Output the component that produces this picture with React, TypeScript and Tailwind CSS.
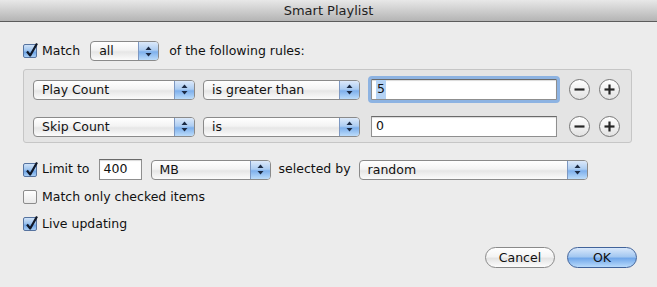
import React from 'react';

const Arrows = () => (
  <svg width="7" height="11" viewBox="0 0 7 11">
    <path d="M3.5 0.5 L6.5 4 L0.5 4 Z" fill="#1b2a44" />
    <path d="M3.5 10.5 L6.5 7 L0.5 7 Z" fill="#1b2a44" />
  </svg>
);

const Popup = ({ label, w }: { label: string; w: string }) => (
  <div
    className={`flex h-[20px] ${w} shrink-0 overflow-hidden rounded-[4px] border border-[#8a8a8a] bg-[linear-gradient(to_bottom,#ffffff_0%,#f3f3f3_45%,#e6e6e6_55%,#fbfbfb_100%)]`}
  >
    <span className="flex-1 truncate pl-[8px] leading-[18px]">{label}</span>
    <span className="flex w-[20px] items-center justify-center border-l border-[#7d98c2] bg-[linear-gradient(to_bottom,#dce9fa_0%,#adcdf2_45%,#7eb0ec_55%,#bcdcfa_100%)]">
      <Arrows />
    </span>
  </div>
);

const Check = ({ on }: { on: boolean }) => (
  <span
    className={`relative flex h-[14px] w-[14px] shrink-0 rounded-[2px] border ${
      on
        ? 'border-[#56739f] bg-[linear-gradient(to_bottom,#cfe2f8_0%,#9ec4ee_45%,#6fa5e6_60%,#a9cff6_100%)]'
        : 'border-[#8c8c8c] bg-[linear-gradient(to_bottom,#ffffff,#e9e9e9)]'
    }`}
  >
    {on && (
      <svg className="absolute left-[1px] top-[-3px]" width="14" height="16" viewBox="0 0 14 16">
        <path d="M2 9.5 L5.2 13.5 L12 1.5" fill="none" stroke="#101828" strokeWidth="2.2" strokeLinejoin="round" />
      </svg>
    )}
  </span>
);

const Field = ({ value, w, focus }: { value: string; w: string; focus?: boolean }) => (
  <div
    className={`flex h-[21px] ${w} shrink-0 items-center border border-[#8f8f8f] border-t-[#6a6a6a] bg-white pl-[4px] shadow-[inset_0_1px_1px_rgba(0,0,0,0.15)] ${
      focus ? 'outline outline-[3px] outline-[#8db3e2] rounded-[1px]' : ''
    }`}
  >
    {focus ? <span className="bg-[#b5d3f5] px-[1px]">{value}</span> : value}
  </div>
);

const Round = ({ plus }: { plus?: boolean }) => (
  <span className="flex h-[21px] w-[21px] items-center justify-center rounded-full border border-[#777777] bg-[linear-gradient(to_bottom,#ffffff,#e2e2e2)]">
    <svg width="11" height="11" viewBox="0 0 11 11">
      <path d="M0.5 5.5 H10.5" stroke="#262626" strokeWidth="2.2" />
      {plus && <path d="M5.5 0.5 V10.5" stroke="#262626" strokeWidth="2.2" />}
    </svg>
  </span>
);

const RuleRow = ({ field, op, value, focus }: { field: string; op: string; value: string; focus?: boolean }) => (
  <div className="flex h-[21px] items-center">
    <Popup label={field} w="w-[162px]" />
    <div className="ml-[8px]">
      <Popup label={op} w="w-[157px]" />
    </div>
    <div className="ml-[11px]">
      <Field value={value} w="w-[186px]" focus={focus} />
    </div>
    <div className="ml-[12px] flex gap-[9px]">
      <Round />
      <Round plus />
    </div>
  </div>
);

export default function App() {
  return (
    <div className="h-[287px] w-[657px] overflow-hidden bg-[#ececec] font-['DejaVu_Sans',sans-serif] text-[12.5px] text-[#111]">
      {/* Title bar */}
      <div className="flex h-[22px] items-center justify-center border-b border-[#5c5c5c] bg-[linear-gradient(to_bottom,#e8e8e8,#b4b4b4)] text-[13px] text-[#1e1e1e]">
        Smart Playlist
      </div>

      <div className="pl-[23px] pr-[20px]">
        {/* Match row */}
        <div className="mt-[19px] flex h-[20px] items-center">
          <Check on />
          <span className="ml-[5px]">Match</span>
          <div className="ml-[10px]">
            <Popup label="all" w="w-[69px]" />
          </div>
          <span className="ml-[10px]">of the following rules:</span>
        </div>

        {/* Rules */}
        <div className="mt-[8px] flex h-[74px] w-[609px] flex-col gap-[16px] rounded-[3px] border border-[#c6c6c6] bg-[#e4e4e4] pl-[9px] pt-[9px]">
          <RuleRow field="Play Count" op="is greater than" value="5" focus />
          <RuleRow field="Skip Count" op="is" value="0" />
        </div>

        {/* Limit row */}
        <div className="mt-[16px] flex h-[21px] items-center">
          <Check on />
          <span className="ml-[5px]">Limit to</span>
          <div className="ml-[9px]">
            <Field value="400" w="w-[43px]" />
          </div>
          <div className="ml-[9px]">
            <Popup label="MB" w="w-[120px]" />
          </div>
          <span className="ml-[8px]">selected by</span>
          <div className="ml-[8px]">
            <Popup label="random" w="w-[229px]" />
          </div>
        </div>

        <div className="mt-[7px] flex h-[20px] items-center">
          <Check on={false} />
          <span className="ml-[5px]">Match only checked items</span>
        </div>

        <div className="mt-[7px] flex h-[20px] items-center">
          <Check on />
          <span className="ml-[5px]">Live updating</span>
        </div>

        {/* Buttons */}
        <div className="mt-[13px] flex justify-end gap-[12px]">
          <button className="h-[21px] w-[70px] rounded-full border border-[#8a8a8a] bg-[linear-gradient(to_bottom,#ffffff_0%,#f4f4f4_45%,#e4e4e4_55%,#fcfcfc_100%)] leading-[19px]">
            Cancel
          </button>
          <button className="h-[21px] w-[70px] rounded-full border border-[#41639a] bg-[linear-gradient(to_bottom,#d9e8fb_0%,#a4c8f1_45%,#72a8ea_55%,#b8dafb_100%)] leading-[19px]">
            OK
          </button>
        </div>
      </div>
    </div>
  );
}
